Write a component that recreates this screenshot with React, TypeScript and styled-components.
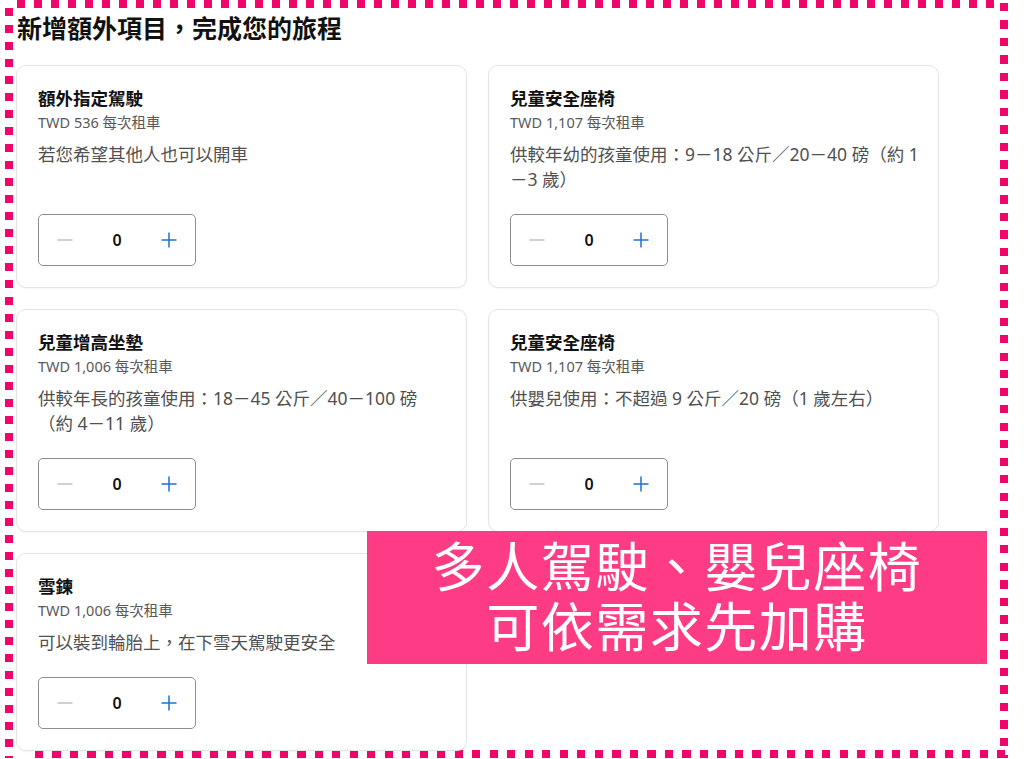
import React from 'react'
import styled, {createGlobalStyle} from 'styled-components'

interface IExtra {
  name: string
  price: string
  desc: string
}

const extras: IExtra[] = [
  {name: '額外指定駕駛', price: 'TWD 536 每次租車', desc: '若您希望其他人也可以開車'},
  {name: '兒童安全座椅', price: 'TWD 1,107 每次租車', desc: '供較年幼的孩童使用：9－18 公斤／20－40 磅（約 1－3 歲）'},
  {name: '兒童增高坐墊', price: 'TWD 1,006 每次租車', desc: '供較年長的孩童使用：18－45 公斤／40－100 磅（約 4－11 歲）'},
  {name: '兒童安全座椅', price: 'TWD 1,107 每次租車', desc: '供嬰兒使用：不超過 9 公斤／20 磅（1 歲左右）'},
  {name: '雪鍊', price: 'TWD 1,006 每次租車', desc: '可以裝到輪胎上，在下雪天駕駛更安全'},
]

const PINK = '#f0066a'

const GlobalStyle = createGlobalStyle`
  html, body {
    margin: 0;
    padding: 0;
    background: #fff;
  }
  body {
    font-family: "Noto Sans", "Noto Sans CJK TC", sans-serif;
    color: #111;
  }
`

export default function App() {
  return (
    <>
      <GlobalStyle />
      <Frame>
        <Heading>新增額外項目，完成您的旅程</Heading>
        <Grid>
          {extras.map((item, i) =>
            <Card key={item.name + i}>
              <Title>{item.name}</Title>
              <Price>{item.price}</Price>
              <Desc>{item.desc}</Desc>
              <Stepper>
                <StepButton aria-label="減少">
                  <svg width="16" height="16" viewBox="0 0 16 16">
                    <line x1="0.5" y1="8" x2="15.5" y2="8" stroke="#c2c2c2" strokeWidth="1.5" />
                  </svg>
                </StepButton>
                <Count>0</Count>
                <StepButton aria-label="增加">
                  <svg width="16" height="16" viewBox="0 0 16 16">
                    <line x1="0.5" y1="8" x2="15.5" y2="8" stroke="#1f6fd2" strokeWidth="1.5" />
                    <line x1="8" y1="0.5" x2="8" y2="15.5" stroke="#1f6fd2" strokeWidth="1.5" />
                  </svg>
                </StepButton>
              </Stepper>
            </Card>,
          )}
        </Grid>
        <Banner>
          <BannerLine>多人駕駛、嬰兒座椅</BannerLine>
          <BannerLine>可依需求先加購</BannerLine>
        </Banner>
      </Frame>
    </>
  )
}

const Frame = styled.div`
  position: relative;
  box-sizing: border-box;
  margin-left: 5px;
  width: 1003px;
  height: 758px;
  padding: 12px 0 0 11px;
  overflow: hidden;
  background:
    repeating-linear-gradient(to right, ${PINK} 0 8px, transparent 8px 17px) 12px 0 / calc(100% - 24px) 8px no-repeat,
    repeating-linear-gradient(to bottom, ${PINK} 0 8px, transparent 8px 17px) 0 8px / 8px calc(100% - 8px) no-repeat,
    repeating-linear-gradient(to bottom, ${PINK} 0 8px, transparent 8px 17.5px) right 0 top 3px / 8px calc(100% - 3px) no-repeat,
    repeating-linear-gradient(to right, ${PINK} 0 8px, transparent 8px 17.5px) 30px 100% / calc(100% - 30px) 8px no-repeat;
`

const Heading = styled.h2`
  margin: 0 0 21px 1px;
  font-size: 25px;
  line-height: 32px;
  font-weight: 700;
  color: #111;
`

const Grid = styled.div`
  display: grid;
  grid-template-columns: 451px 451px;
  column-gap: 21px;
  row-gap: 21px;
  align-items: stretch;
`

const Card = styled.div`
  display: flex;
  flex-direction: column;
  box-sizing: border-box;
  min-height: 222px;
  padding: 21px 16px 21px 21px;
  background: #fff;
  border: 1px solid #e4e4e4;
  border-radius: 10px;
  box-shadow: 0 1px 2px rgba(0, 0, 0, 0.04);

  &:last-child {
    min-height: 0;
  }
`

const Title = styled.div`
  font-size: 17.5px;
  line-height: 22px;
  font-weight: 700;
  color: #111;
`

const Price = styled.div`
  margin-top: 3px;
  font-size: 14.5px;
  line-height: 20px;
  color: #595959;
`

const Desc = styled.p`
  margin: 10px 0 22px;
  font-size: 17.5px;
  line-height: 25px;
  color: #505050;
`

const Stepper = styled.div`
  display: grid;
  grid-template-columns: repeat(3, 52px);
  align-items: center;
  box-sizing: border-box;
  width: 158px;
  height: 52px;
  margin-top: auto;
  border: 1px solid #8f8f8f;
  border-radius: 5px;
`

const StepButton = styled.button`
  display: flex;
  align-items: center;
  justify-content: center;
  height: 100%;
  padding: 0;
  background: none;
  border: 0;
  cursor: pointer;
`

const Count = styled.span`
  text-align: center;
  font-size: 16px;
  font-weight: 600;
  color: #111;
`

const Banner = styled.div`
  position: absolute;
  left: 362px;
  top: 531px;
  box-sizing: border-box;
  width: 620px;
  height: 133px;
  padding-top: 3px;
  display: flex;
  flex-direction: column;
  align-items: center;
  background: #fe3c86;
  color: #fff;
  font-family: "Noto Sans CJK TC", sans-serif;
  font-size: 53px;
  letter-spacing: 1.5px;
  font-weight: 400;
`

const BannerLine = styled.span`
  display: block;
  line-height: 60px;
`
